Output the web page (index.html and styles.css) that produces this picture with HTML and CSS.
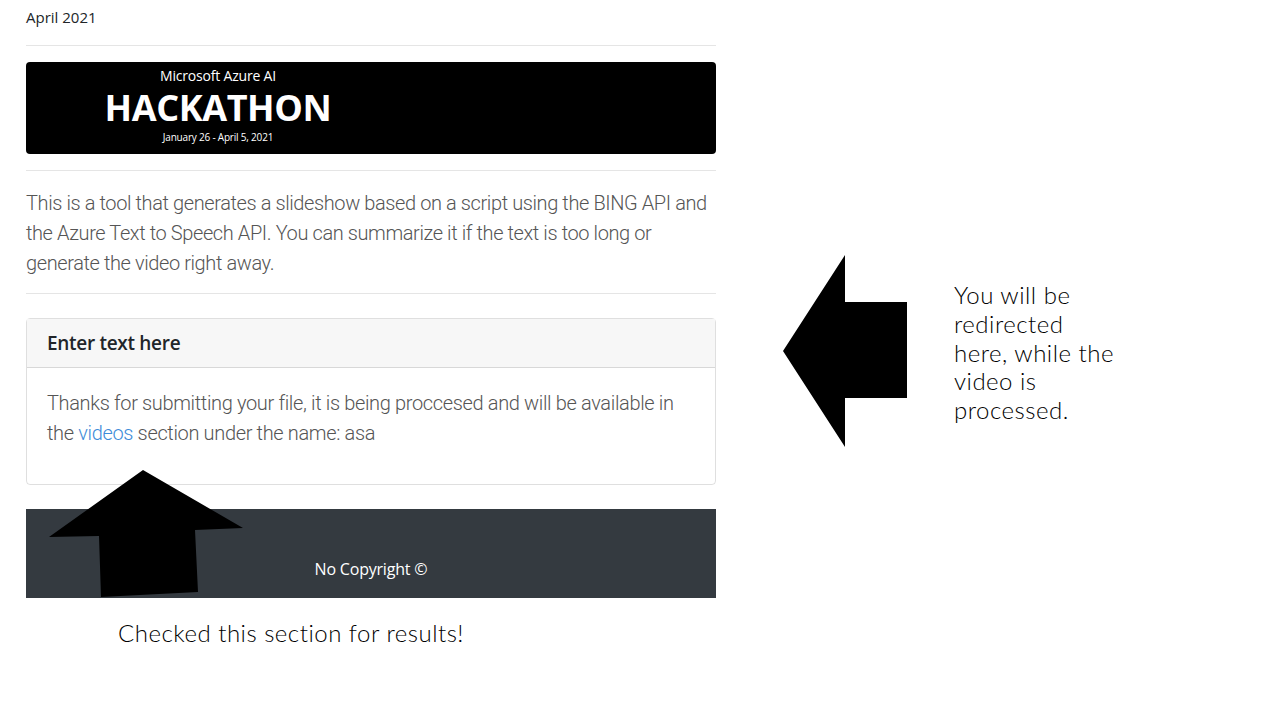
FILE: index.html
```html
<!DOCTYPE html>
<html lang="en">
<head>
<meta charset="utf-8">
<title>Hackathon slideshow tool</title>
<link rel="stylesheet" href="styles.css">
</head>
<body>
<div class="slide">
  <main class="page">
    <p class="date">April 2021</p>
    <hr class="rule">
    <div class="banner">
      <div class="banner-text">
        <span class="banner-sup">Microsoft Azure AI</span>
        <span class="banner-title">HACKATHON</span>
        <span class="banner-dates">January 26 - April 5, 2021</span>
      </div>
    </div>
    <hr class="rule">
    <p class="lead">This is a tool that generates a slideshow based on a script using the BING API and<br>the Azure Text to Speech API. You can summarize it if the text is too long or<br>generate the video right away.</p>
    <hr class="rule">
    <section class="card">
      <h5 class="card-header">Enter text here</h5>
      <div class="card-body">
        <p class="card-text">Thanks for submitting your file, it is being proccesed and will be available in<br>the <a href="#" class="link">videos</a> section under the name: asa</p>
      </div>
    </section>
    <footer class="footer">No Copyright ©</footer>
    <p class="caption">Checked this section for results!</p>
  </main>

  <svg class="arrow-left" width="130" height="196" viewBox="0 0 130 196" aria-hidden="true">
    <polygon points="0,96 62,0 62,47 124,47 124,143 62,143 62,192" fill="#000"/>
  </svg>
  <svg class="arrow-up" width="200" height="130" viewBox="0 0 200 130" aria-hidden="true">
    <polygon points="94,0 194,58 146,60 149,122 52,127 50,66 0,67" fill="#000"/>
  </svg>
  <p class="note">You will be<br>redirected<br>here, while the<br>video is<br>processed.</p>
</div>
</body>
</html>
```
FILE: styles.css
```css
* { box-sizing: border-box; }
html, body { margin: 0; padding: 0; background: #fff; }
body {
  font-family: "Open Sans", "Noto Sans", "Liberation Sans", sans-serif;
  color: #212529;
  width: 1280px;
  height: 720px;
  overflow: hidden;
}
.slide {
  position: relative;
  width: 1280px;
  height: 720px;
}
.page {
  width: 690px;
  margin-left: 26px;
  padding-top: 5px;
  display: flex;
  flex-direction: column;
}
.date {
  margin: 0 0 16px;
  font-size: 15px;
  line-height: 24px;
}
.rule {
  margin: 0;
  border: 0;
  border-top: 1px solid rgba(0,0,0,0.1);
  height: 0;
}
.banner {
  margin: 16px 0;
  height: 92px;
  background: #000;
  border-radius: 4px;
  display: flex;
  padding-left: 68px;
}
.banner-text {
  width: 248px;
  display: flex;
  flex-direction: column;
  align-items: center;
  color: #fff;
  font-family: "Open Sans", "Noto Sans", sans-serif;
}
.banner-sup {
  margin-top: 6px;
  font-size: 14px;
  line-height: 16px;
  letter-spacing: -0.2px;
}
.banner-title {
  margin-top: 6px;
  font-size: 36px;
  font-weight: 700;
  line-height: 36px;
  letter-spacing: -0.4px;
}
.banner-dates {
  margin-top: 4px;
  font-size: 10px;
  line-height: 14px;
  letter-spacing: -0.2px;
}
.lead {
  margin: 17px 0 15px;
  font-family: Roboto, "Open Sans", sans-serif;
  font-size: 20px;
  font-weight: 300;
  line-height: 30px;
  color: #555;
  letter-spacing: -0.4px;
  white-space: nowrap;
}
.card {
  margin-top: 24px;
  border: 1px solid rgba(0,0,0,0.125);
  border-radius: 4px;
  display: flex;
  flex-direction: column;
}
.card-header {
  margin: 0;
  padding: 12px 20px;
  background: #f7f7f7;
  border-bottom: 1px solid rgba(0,0,0,0.125);
  font-size: 19px;
  font-weight: 600;
  line-height: 24px;
  color: #212529;
  letter-spacing: -0.3px;
}
.card-body {
  padding: 20px;
}
.card-text {
  margin: 0 0 16px;
  font-family: Roboto, "Open Sans", sans-serif;
  font-size: 20px;
  font-weight: 300;
  line-height: 30px;
  color: #555;
  letter-spacing: -0.35px;
  white-space: nowrap;
}
.link {
  color: #3d8bd9;
  text-decoration: none;
}
.footer {
  margin-top: 24px;
  height: 89px;
  background: #343a40;
  color: #fff;
  font-size: 16px;
  line-height: 24px;
  padding-top: 48px;
  text-align: center;
  letter-spacing: -0.2px;
}
.caption {
  margin: 22px 0 0 92px;
  font-family: Lato, "Open Sans", sans-serif;
  font-size: 24px;
  font-weight: 300;
  line-height: 26px;
  letter-spacing: 0.5px;
  color: #000;
}
.arrow-left {
  position: absolute;
  left: 783px;
  top: 255px;
}
.arrow-up {
  position: absolute;
  left: 49px;
  top: 470px;
}
.note {
  position: absolute;
  left: 954px;
  top: 281px;
  margin: 0;
  font-family: Lato, "Open Sans", sans-serif;
  font-size: 24px;
  font-weight: 300;
  line-height: 28.8px;
  letter-spacing: 0.5px;
  color: #000;
}
```
